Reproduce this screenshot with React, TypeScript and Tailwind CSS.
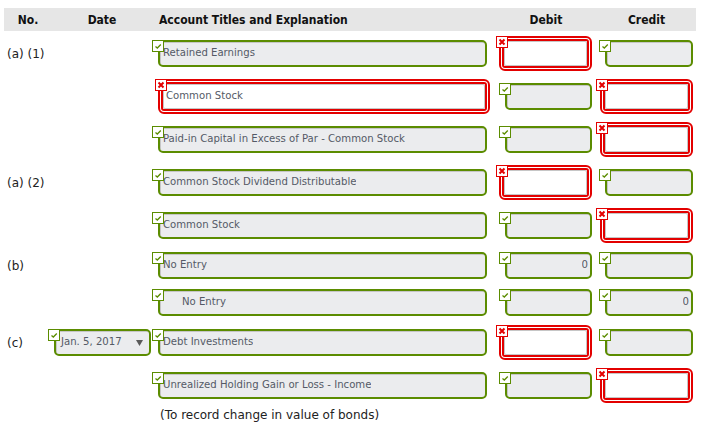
import React from 'react';
import { clsx } from 'clsx';

type State = 'ok' | 'bad';
type Col = 'account' | 'debit' | 'credit';

const place: Record<Col, Record<State, { badge: string; box: string }>> = {
  account: {
    ok: { badge: 'left-0', box: 'ml-[6px] w-[329px]' },
    bad: { badge: 'left-[3px]', box: 'ml-[6px] w-[332px]' },
  },
  debit: {
    ok: { badge: 'left-[4px]', box: 'ml-[10px] w-[87px]' },
    bad: { badge: 'left-[1px]', box: 'ml-[4px] w-[93px]' },
  },
  credit: {
    ok: { badge: 'left-[3px]', box: 'ml-[9px] w-[88px]' },
    bad: { badge: 'left-0', box: 'ml-[4px] w-[93px]' },
  },
};

const inputFont = "font-['DejaVu_Sans_Condensed','DejaVu_Sans',sans-serif] text-[11.25px] text-[#545a66]";

function Badge({ state, className }: { state: State; className?: string }) {
  return (
    <span
      className={clsx(
        'absolute top-0 z-10 flex h-[12px] w-[12px] items-center justify-center border bg-white',
        state === 'ok' ? 'border-[#5b8c00]' : 'border-[#e30000]',
        className,
      )}
    >
      {state === 'ok' ? (
        <svg width="10" height="10" viewBox="0 0 10 10">
          <polyline points="2.5,5.5 4.3,7 7.8,3.5" fill="none" stroke="#5b8c00" strokeWidth="1.3" />
        </svg>
      ) : (
        <svg width="10" height="10" viewBox="0 0 10 10">
          <path d="M2.5 2.5 L7.5 7.5 M7.5 2.5 L2.5 7.5" stroke="#e30000" strokeWidth="2" />
        </svg>
      )}
    </span>
  );
}

function Field({
  col,
  state,
  value = '',
  align = 'left',
  indent = false,
}: {
  col: Col;
  state: State;
  value?: string;
  align?: 'left' | 'right';
  indent?: boolean;
}) {
  const p = place[col][state];
  return (
    <div className="relative h-full">
      <Badge state={state} className={p.badge} />
      {state === 'ok' ? (
        <div
          className={clsx(
            'mt-[7px] flex h-[27px] items-center rounded-[5px] border-2 border-[#5b8c00] bg-[#ebecee] shadow-[inset_1px_1px_0_#c6c6c6]',
            inputFont,
            align === 'right' ? 'justify-end pr-[2px]' : indent ? 'pl-[22px]' : 'pl-[3px]',
            p.box,
          )}
        >
          <span className="truncate">{value}</span>
        </div>
      ) : (
        <div className={clsx('mt-[3px] h-[35px] rounded-[6px] border-[5px] border-double border-[#e30000]', p.box)}>
          <div className={clsx('flex h-full items-center rounded-[2px] border border-[#c6c6c6] bg-white pl-[2px]', inputFont)}>
            {value}
          </div>
        </div>
      )}
    </div>
  );
}

function DateSelect({ value }: { value: string }) {
  return (
    <div className="relative h-full">
      <Badge state="ok" className="left-0" />
      <div
        className={clsx(
          'ml-[6px] mt-[7px] flex h-[27px] w-[97px] items-center justify-between rounded-[5px] border-2 border-[#5b8c00] bg-[#ebecee] pl-[5px] pr-[6px] shadow-[inset_1px_1px_0_#c6c6c6]',
          inputFont,
        )}
      >
        <span>{value}</span>
        <svg width="7" height="6" viewBox="0 0 7 6">
          <polygon points="0,0 7,0 3.5,6" fill="#5a5a5a" />
        </svg>
      </div>
    </div>
  );
}

type Row = {
  no?: string;
  date?: string;
  h: string;
  account: [State, string, boolean?];
  debit: [State, string?];
  credit: [State, string?];
};

const rows: Row[] = [
  { no: '(a) (1)', h: 'h-[43px]', account: ['ok', 'Retained Earnings'], debit: ['bad'], credit: ['ok'] },
  { h: 'h-[43px]', account: ['bad', 'Common Stock'], debit: ['ok'], credit: ['bad'] },
  { h: 'h-[43px]', account: ['ok', 'Paid-in Capital in Excess of Par - Common Stock'], debit: ['ok'], credit: ['bad'] },
  { no: '(a) (2)', h: 'h-[43px]', account: ['ok', 'Common Stock Dividend Distributable'], debit: ['bad'], credit: ['ok'] },
  { h: 'h-[40px]', account: ['ok', 'Common Stock'], debit: ['ok'], credit: ['bad'] },
  { no: '(b)', h: 'h-[37px]', account: ['ok', 'No Entry'], debit: ['ok', '0'], credit: ['ok'] },
  { h: 'h-[40px]', account: ['ok', 'No Entry', true], debit: ['ok'], credit: ['ok', '0'] },
  { no: '(c)', date: 'Jan. 5, 2017', h: 'h-[43px]', account: ['ok', 'Debt Investments'], debit: ['bad'], credit: ['ok'] },
  { h: 'h-[40px]', account: ['ok', 'Unrealized Holding Gain or Loss - Income'], debit: ['ok'], credit: ['bad'] },
];

export default function App() {
  return (
    <div className="h-[426px] w-[705px] bg-white pt-[8px] font-['DejaVu_Sans',sans-serif] text-[12px] text-[#222]">
      {/* header */}
      <div className="ml-[4px] flex h-[23px] w-[692px] items-center bg-[#e6e6e6] font-['DejaVu_Sans_Condensed','DejaVu_Sans',sans-serif] font-bold text-[#111]">
        <div className="w-[48px] text-center">No.</div>
        <div className="w-[100px] text-center">Date</div>
        <div className="w-[343px] pl-[7px]">Account Titles and Explanation</div>
        <div className="w-[102px] text-center">Debit</div>
        <div className="w-[99px] text-center">Credit</div>
      </div>

      <div className="mt-[2px]">
        {rows.map((r, i) => (
          <div key={i} className={clsx('flex', r.h)}>
            <div className="flex h-[41px] w-[48px] items-center pl-[7px]">{r.no}</div>
            <div className="w-[104px]">{r.date && <DateSelect value={r.date} />}</div>
            <div className="w-[343px]">
              <Field col="account" state={r.account[0]} value={r.account[1]} indent={r.account[2]} />
            </div>
            <div className="w-[101px]">
              <Field col="debit" state={r.debit[0]} value={r.debit[1]} align="right" />
            </div>
            <div className="w-[104px]">
              <Field col="credit" state={r.credit[0]} value={r.credit[1]} align="right" />
            </div>
          </div>
        ))}
      </div>

      <div className="ml-[160px] mt-[1px]">(To record change in value of bonds)</div>
    </div>
  );
}
